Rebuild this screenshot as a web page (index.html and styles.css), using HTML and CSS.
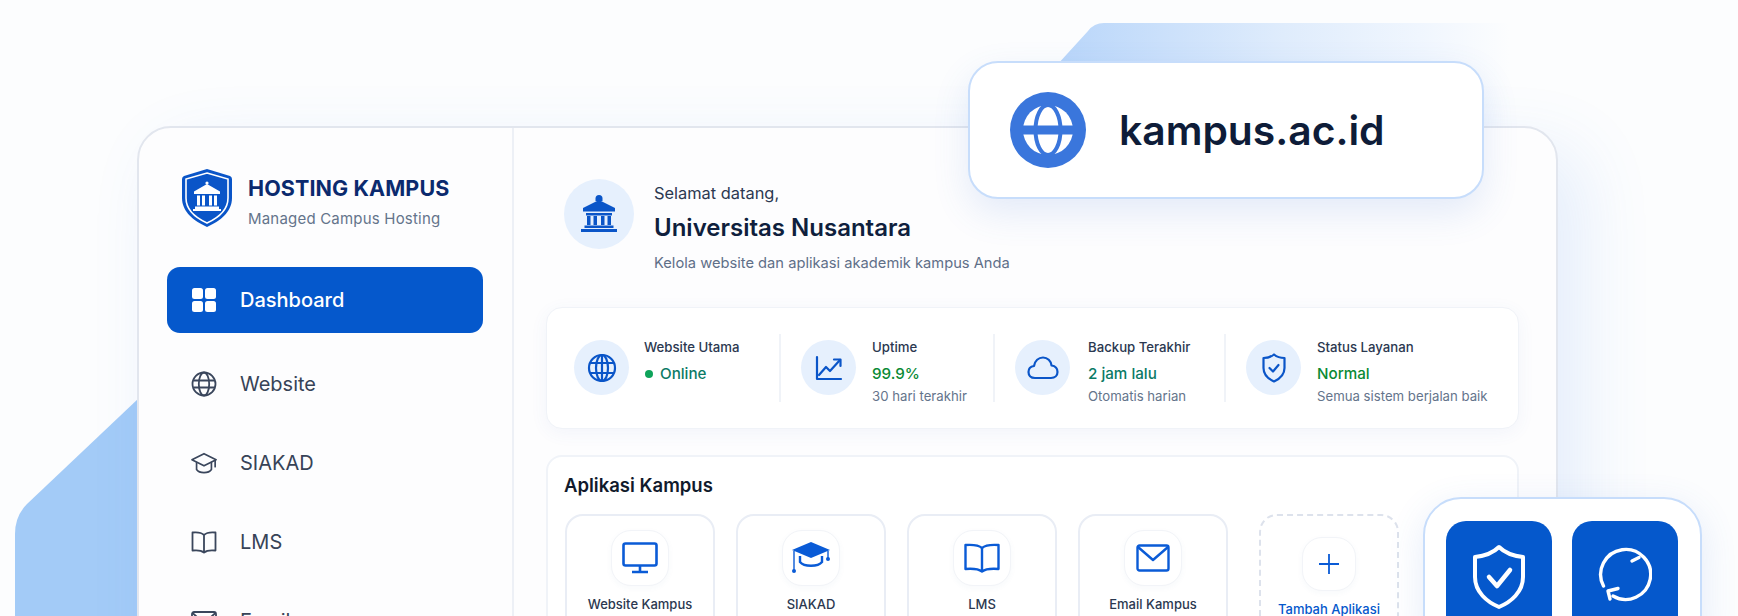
FILE: index.html
```html
<!DOCTYPE html>
<html lang="id">
<head>
<meta charset="utf-8">
<title>Hosting Kampus</title>
<link rel="stylesheet" href="styles.css">
</head>
<body>
<div class="stage">
  <svg class="deco deco-top" width="460" height="110" viewBox="0 0 460 110">
    <defs><linearGradient id="fadeTop" x1="0" x2="1" y1="0" y2="0"><stop offset="0" stop-color="#b9d6fa"/><stop offset=".5" stop-color="#dfecfc"/><stop offset=".8" stop-color="#f0f6fe"/><stop offset="1" stop-color="#fcfdfe"/></linearGradient></defs>
    <path d="M7 42 L38 8 Q44 0 54 0 L460 0 L460 110 L7 110Z" fill="url(#fadeTop)"/>
  </svg>
  <svg class="deco deco-left" width="140" height="220" viewBox="0 0 140 220">
    <path d="M124 0 L12 106 Q0 118 0 136 L0 220 L124 220Z" fill="#a3cbf7"/>
  </svg>

  <main class="panel">
    <aside class="sidebar">
      <div class="brand">
        <svg class="brand-mark" width="52" height="60" viewBox="0 0 52 60">
          <path d="M26 1 L49 8 Q51 9 51 11 V30 C51 44 39 53 26 59 C13 53 1 44 1 30 V11 Q1 9 3 8Z" fill="#0a55c8"/>
          <path d="M26 5 L47 11 V30 C47 42 37 50 26 55 C15 50 5 42 5 30 V11Z" fill="none" stroke="#fff" stroke-width="1.6"/>
          <circle cx="26" cy="15" r="1.600" fill="#fff"/>
          <path d="M26 16 L39 23.500 V26 H13 V23.500Z M16 27.500 h3 v10 h-3Z M21 27.500 h3 v10 h-3Z M28 27.500 h3 v10 h-3Z M33 27.500 h3 v10 h-3Z M14 38.500 H38 V41 H40 V43 H12 V41 H14Z" fill="#fff"/>
        </svg>
        <div class="brand-text">
          <div class="brand-name">HOSTING KAMPUS</div>
          <div class="brand-sub">Managed Campus Hosting</div>
        </div>
      </div>
      <nav class="nav">
        <a class="nav-item active">
          <svg class="nav-icon" width="26" height="26" viewBox="0 0 26 26" fill="#fff"><rect x="1" y="1" width="11" height="11" rx="2.5"/><rect x="14" y="1" width="11" height="11" rx="2.5"/><rect x="1" y="14" width="11" height="11" rx="2.5"/><rect x="14" y="14" width="11" height="11" rx="2.5"/></svg>
          <span>Dashboard</span>
        </a>
        <a class="nav-item">
          <svg class="nav-icon" width="26" height="26" viewBox="0 0 26 26" fill="none" stroke="#3a465c" stroke-width="1.8"><circle cx="13" cy="13" r="11.5"/><ellipse cx="13" cy="13" rx="5.2" ry="11.5"/><path d="M2.5 9.5h21M2.5 16.5h21"/></svg>
          <span>Website</span>
        </a>
        <a class="nav-item">
          <svg class="nav-icon" width="28" height="26" viewBox="0 0 28 26" fill="none" stroke="#3a465c" stroke-width="1.8" stroke-linejoin="round" stroke-linecap="round"><path d="M14 3 L27 9.5 L14 16 L1 9.5Z"/><path d="M6 12.5 V20 C9 24.5 19 24.5 22 20 V12.5"/><path d="M26 10 V17"/></svg>
          <span>SIAKAD</span>
        </a>
        <a class="nav-item">
          <svg class="nav-icon" width="26" height="26" viewBox="0 0 26 26" fill="none" stroke="#3a465c" stroke-width="1.8" stroke-linejoin="round"><path d="M13 6 C10 3 6 3 1.5 3.5 V21.5 C6 21 10 21 13 23.5 C16 21 20 21 24.5 21.5 V3.5 C20 3 16 3 13 6Z M13 6 V23.5"/></svg>
          <span>LMS</span>
        </a>
        <a class="nav-item">
          <svg class="nav-icon" width="26" height="26" viewBox="0 0 26 26" fill="none" stroke="#3a465c" stroke-width="1.8" stroke-linejoin="round"><rect x="1" y="4" width="24" height="18" rx="2"/><path d="M1.5 5 L13 15 L24.5 5"/></svg>
          <span>Email</span>
        </a>
      </nav>
    </aside>

    <section class="content">
      <header class="welcome">
        <div class="welcome-badge">
          <svg width="38" height="38" viewBox="0 0 38 38" fill="#0a55c8"><path d="M19 0 a3.500 3.500 0 0 1 3.500 3.500 V6 h-7 V3.500 A3.500 3.500 0 0 1 19 0Z"/><path d="M19 5 L35 13 V16.500 H3 V13Z"/><path d="M6 18h26v2.500H6Z M7 21h3.500v9H7Z M13.500 21h3.500v9h-3.500Z M21 21h3.500v9H21Z M27.500 21h3.500v9h-3.500Z M4.500 30.500h29v2.500h-29Z M1 34h36v3H1Z"/></svg>
        </div>
        <div class="welcome-text">
          <div class="welcome-hello">Selamat datang,</div>
          <h1 class="welcome-name">Universitas Nusantara</h1>
          <p class="welcome-sub">Kelola website dan aplikasi akademik kampus Anda</p>
        </div>
      </header>

      <section class="stats">
        <div class="stat stat-a">
          <div class="stat-icon"><svg width="30" height="30" viewBox="0 0 30 30" fill="none" stroke="#0a55c8" stroke-width="2.200"><circle cx="15" cy="15" r="13"/><ellipse cx="15" cy="15" rx="6" ry="13"/><path d="M3.500 10h23M3.500 20h23M15 2v26"/></svg></div>
          <div class="stat-text">
            <div class="stat-label">Website Utama</div>
            <div class="stat-value teal"><i class="dot"></i>Online</div>
          </div>
        </div>
        <div class="stat stat-b">
          <div class="stat-icon"><svg width="28" height="26" viewBox="0 0 28 26" fill="none" stroke="#0a55c8" stroke-width="2.200" stroke-linecap="round" stroke-linejoin="round"><path d="M2 2V24H26"/><path d="M4 20 L11 12 L15 16 L25 5"/><path d="M19 4.500H25.500V11"/></svg></div>
          <div class="stat-text">
            <div class="stat-label">Uptime</div>
            <div class="stat-value green">99.9%</div>
            <div class="stat-sub">30 hari terakhir</div>
          </div>
        </div>
        <div class="stat stat-c">
          <div class="stat-icon"><svg width="32" height="26" viewBox="0 0 32 26" fill="none" stroke="#0a55c8" stroke-width="2.200" stroke-linejoin="round"><path d="M8 23 C3.500 23 1.500 20 1.500 17 C1.500 13.500 4 11.500 7 11 C8 6 11.500 2.500 16 2.500 C20.500 2.500 24 6 24.500 10.500 C28 11 30.500 13.500 30.500 17 C30.500 20.500 28 23 24 23Z"/></svg></div>
          <div class="stat-text">
            <div class="stat-label">Backup Terakhir</div>
            <div class="stat-value teal">2 jam lalu</div>
            <div class="stat-sub">Otomatis harian</div>
          </div>
        </div>
        <div class="stat stat-d">
          <div class="stat-icon"><svg width="24" height="30" viewBox="0 0 24 30" fill="none" stroke="#0a55c8" stroke-width="2.200" stroke-linejoin="round" stroke-linecap="round"><path d="M12 1.500 C15 4 18.500 5 22.500 5 V15 C22.500 22 17.500 26 12 28.500 C6.500 26 1.500 22 1.500 15 V5 C5.500 5 9 4 12 1.500Z"/><path d="M7.500 15 L11 18.500 L16.500 12"/></svg></div>
          <div class="stat-text">
            <div class="stat-label">Status Layanan</div>
            <div class="stat-value green">Normal</div>
            <div class="stat-sub">Semua sistem berjalan baik</div>
          </div>
        </div>
      </section>

      <section class="apps">
        <h2 class="apps-title">Aplikasi Kampus</h2>
        <div class="app-row">
          <div class="tile t1">
            <div class="tile-icon"><svg width="36" height="32" viewBox="0 0 36 32" fill="none" stroke="#0a5bd6" stroke-width="2.600" stroke-linejoin="round"><rect x="1.500" y="1.500" width="33" height="22" rx="2"/><path d="M18 24v5M10 30h16"/></svg></div>
            <div class="tile-name">Website Kampus</div>
          </div>
          <div class="tile t2">
            <div class="tile-icon"><svg width="40" height="34" viewBox="0 0 40 34"><path d="M20 1 L39 9 L20 17 L1 9Z" fill="#0a5bd6"/><path d="M9 15 V21 C13 26 27 26 31 21 V15" fill="none" stroke="#0a5bd6" stroke-width="2.400"/><path d="M3 10 V29" stroke="#0a5bd6" stroke-width="1.400"/><circle cx="3" cy="30" r="2" fill="#0a5bd6"/><path d="M37 10 V18" stroke="#0a5bd6" stroke-width="1.400"/><circle cx="37" cy="18" r="2" fill="#0a5bd6"/></svg></div>
            <div class="tile-name">SIAKAD</div>
          </div>
          <div class="tile t3">
            <div class="tile-icon"><svg width="36" height="30" viewBox="0 0 36 30" fill="none" stroke="#0a5bd6" stroke-width="2.400" stroke-linejoin="round"><path d="M18 5 C14 1.500 8 1.500 1.500 2 V26 C8 25.500 14 25.500 18 28.500 C22 25.500 28 25.500 34.500 26 V2 C28 1.500 22 1.500 18 5Z M18 5 V28.500"/></svg></div>
            <div class="tile-name">LMS</div>
          </div>
          <div class="tile t4">
            <div class="tile-icon"><svg width="34" height="28" viewBox="0 0 34 28" fill="none" stroke="#0a5bd6" stroke-width="2.400" stroke-linejoin="round"><rect x="1.500" y="1.500" width="31" height="25" rx="2"/><path d="M2 3 L17 16 L32 3"/></svg></div>
            <div class="tile-name">Email Kampus</div>
          </div>
          <div class="tile tile-add">
            <div class="tile-icon add-icon"><svg width="22" height="22" viewBox="0 0 22 22" stroke="#0a5bd6" stroke-width="1.800"><path d="M11 1V21M1 11H21"/></svg></div>
            <div class="tile-name add-name">Tambah Aplikasi</div>
          </div>
        </div>
      </section>
    </section>
  </main>

  <div class="domain">
    <svg width="76" height="76" viewBox="0 0 76 76"><circle cx="38" cy="38" r="38" fill="#3a76dc"/><circle cx="38" cy="38" r="25" fill="#fff"/><ellipse cx="38" cy="38" rx="12.500" ry="25" fill="none" stroke="#3a76dc" stroke-width="4"/><path d="M10 33.500H66V42.500H10Z" fill="#3a76dc"/></svg>
    <span class="domain-name">kampus.ac.id</span>
  </div>

  <div class="actions">
    <div class="action">
      <svg width="54" height="66" viewBox="0 0 54 66" fill="none" stroke="#fff" stroke-width="4" stroke-linejoin="round" stroke-linecap="round"><path d="M27 3 C33 9 42 12 51 13 V33 C51 48 39 58 27 63 C15 58 3 48 3 33 V13 C12 12 21 9 27 3Z"/><path d="M17 33 L25 42 L38 26" stroke-width="4.500"/></svg>
    </div>
    <div class="action">
      <svg width="54" height="66" viewBox="0 0 54 66" fill="none" stroke="#fff" stroke-width="3.400" stroke-linecap="round" stroke-linejoin="round"><path d="M15 52 A25 25 0 1 0 5.500 42"/><path d="M34 17 L41 13.500"/><path d="M20 44.500 L10 47 L12 55"/></svg>
    </div>
  </div>
</div>
</body>
</html>
```

FILE: styles.css
```css
* { box-sizing: border-box; }
html, body { margin: 0; padding: 0; }
body { width: 1738px; height: 616px; overflow: hidden; background: #fcfdfe; font-family: Inter, "Liberation Sans", sans-serif; color: #0f1f3d; }
.stage { position: relative; width: 1738px; height: 616px; overflow: hidden; padding: 126px 180px 0 137px; }
.deco { position: absolute; display: block; }
.deco-top { left: 1050px; top: 23px; }
.deco-left { left: 15px; top: 398px; }

.panel { position: relative; display: grid; grid-template-columns: 375px 1fr; height: 620px; background: #fdfdfe; border: 2px solid #e2e6ee; border-radius: 34px; box-shadow: 24px 24px 70px rgba(70, 130, 230, .13); }

.sidebar { border-right: 2px solid #edf0f6; padding: 40px 29px 0 28px; }
.brand { display: flex; align-items: center; gap: 15px; padding-left: 14px; }
.brand-mark { flex: none; }
.brand-text { padding-top: 7px; }
.brand-name { font-size: 21.500px; font-weight: 700; color: #0b2a6e; line-height: 26px; letter-spacing: .1px; }
.brand-sub { font-size: 15px; color: #64748b; line-height: 18px; margin-top: 9px; letter-spacing: .2px; }

.nav { margin-top: 39px; display: flex; flex-direction: column; gap: 13px; }
.nav-item { display: flex; align-items: center; height: 66px; padding-left: 24px; font-size: 20px; font-weight: 400; color: #374357; border-radius: 13px; }
.nav-item span { margin-left: 23px; }
.nav-icon { flex: none; width: 26px; }
.nav-item.active { background: #0558cc; color: #fff; font-weight: 500; margin-bottom: 5px; }

.content { padding: 0 37px 0 32px; min-width: 0; }
.welcome { display: flex; align-items: flex-start; padding: 51px 0 0 18px; height: 179px; gap: 20px; }
.welcome-badge { flex: none; width: 70px; height: 70px; border-radius: 50%; background: #e6f0fd; display: flex; align-items: center; justify-content: center; }
.welcome-text { padding-top: 4px; }
.welcome-hello { font-size: 16.400px; line-height: 20px; color: #2b3850; }
.welcome-name { margin: 9px 0 0; font-size: 24px; line-height: 32px; font-weight: 600; color: #0f1f3d; }
.welcome-sub { margin: 9px 0 0; font-size: 14.700px; line-height: 20px; color: #5f6f88; }

.stats { position: relative; height: 122px; background: #fff; border: 1px solid #f0f3f8; border-radius: 16px; box-shadow: 0 4px 18px rgba(70, 110, 180, .06); display: grid; grid-template-columns: 232px 214px 231px 1fr; padding: 26px 0 0; }
.stat { display: flex; align-items: flex-start; gap: 16px; height: 68px; border-left: 2px solid #f0f3f8; padding-left: 20px; }
.stat-a { border-left: 0; padding-left: 27px; }
.stat-c { gap: 18px; }
.stat-icon { flex: none; width: 55px; height: 55px; border-radius: 50%; background: #e6f0fd; display: flex; align-items: center; justify-content: center; margin-top: 6px; }
.stat-a .stat-icon { margin-right: -1px; }
.stat-label { font-size: 13.200px; font-weight: 500; line-height: 18px; color: #2b3850; margin-top: 4px; white-space: nowrap; }
.stat-value { font-size: 15.200px; font-weight: 500; line-height: 20px; margin-top: 8px; white-space: nowrap; display: flex; align-items: center; }
.stat-sub { font-size: 13.200px; line-height: 18px; color: #64748b; margin-top: 3px; white-space: nowrap; }
.teal { color: #0b7a66; }
.green { color: #0a8a34; }
.dot { width: 8px; height: 8px; border-radius: 50%; background: #0ea35a; margin: 0 7px 0 1px; }

.apps { margin-top: 26px; height: 300px; background: #fff; border: 2px solid #f0f3f8; border-radius: 16px; padding: 16px 17px; }
.apps-title { margin: 0 0 0 -1px; font-size: 18.500px; line-height: 24px; font-weight: 600; color: #111a2c; }
.app-row { display: flex; margin-top: 17px; gap: 21px; }
.tile { width: 150px; height: 160px; border: 2px solid #e9edf5; border-radius: 18px; display: flex; flex-direction: column; align-items: center; padding-top: 14px; }
.tile-icon { width: 58px; height: 56px; border-radius: 20px; background: #fff; border: 1px solid #f2f4f8; box-shadow: 0 2px 6px rgba(60, 90, 150, .04); display: flex; align-items: center; justify-content: center; }
.tile-name { margin-top: 9px; font-size: 13px; font-weight: 500; line-height: 18px; color: #2b3850; white-space: nowrap; }
.tile-add { width: 140px; margin-left: 10px; border: 2px dashed #dde2ec; padding-top: 21px; }
.add-icon { width: 54px; height: 54px; }
.add-name { margin-top: 9px; color: #0558cc; }

.domain { position: absolute; left: 968px; top: 61px; width: 516px; height: 138px; background: #fff; border: 2px solid #c7ddfb; border-radius: 30px; box-shadow: 0 14px 36px rgba(70, 120, 210, .14); display: flex; align-items: center; padding-left: 40px; }
.domain-name { margin-left: 33px; font-size: 40.800px; font-weight: 600; color: #0e1c38; }

.actions { position: absolute; left: 1423px; top: 497px; width: 279px; height: 160px; background: #fff; border: 2px solid #c7ddfb; border-radius: 38px; box-shadow: 0 10px 36px rgba(70, 120, 210, .14); display: flex; gap: 20px; padding: 22px 0 0 21px; }
.action { flex: none; width: 106px; height: 120px; background: #0558cc; border-radius: 20px; display: flex; align-items: flex-start; justify-content: center; padding-top: 23px; }
```
